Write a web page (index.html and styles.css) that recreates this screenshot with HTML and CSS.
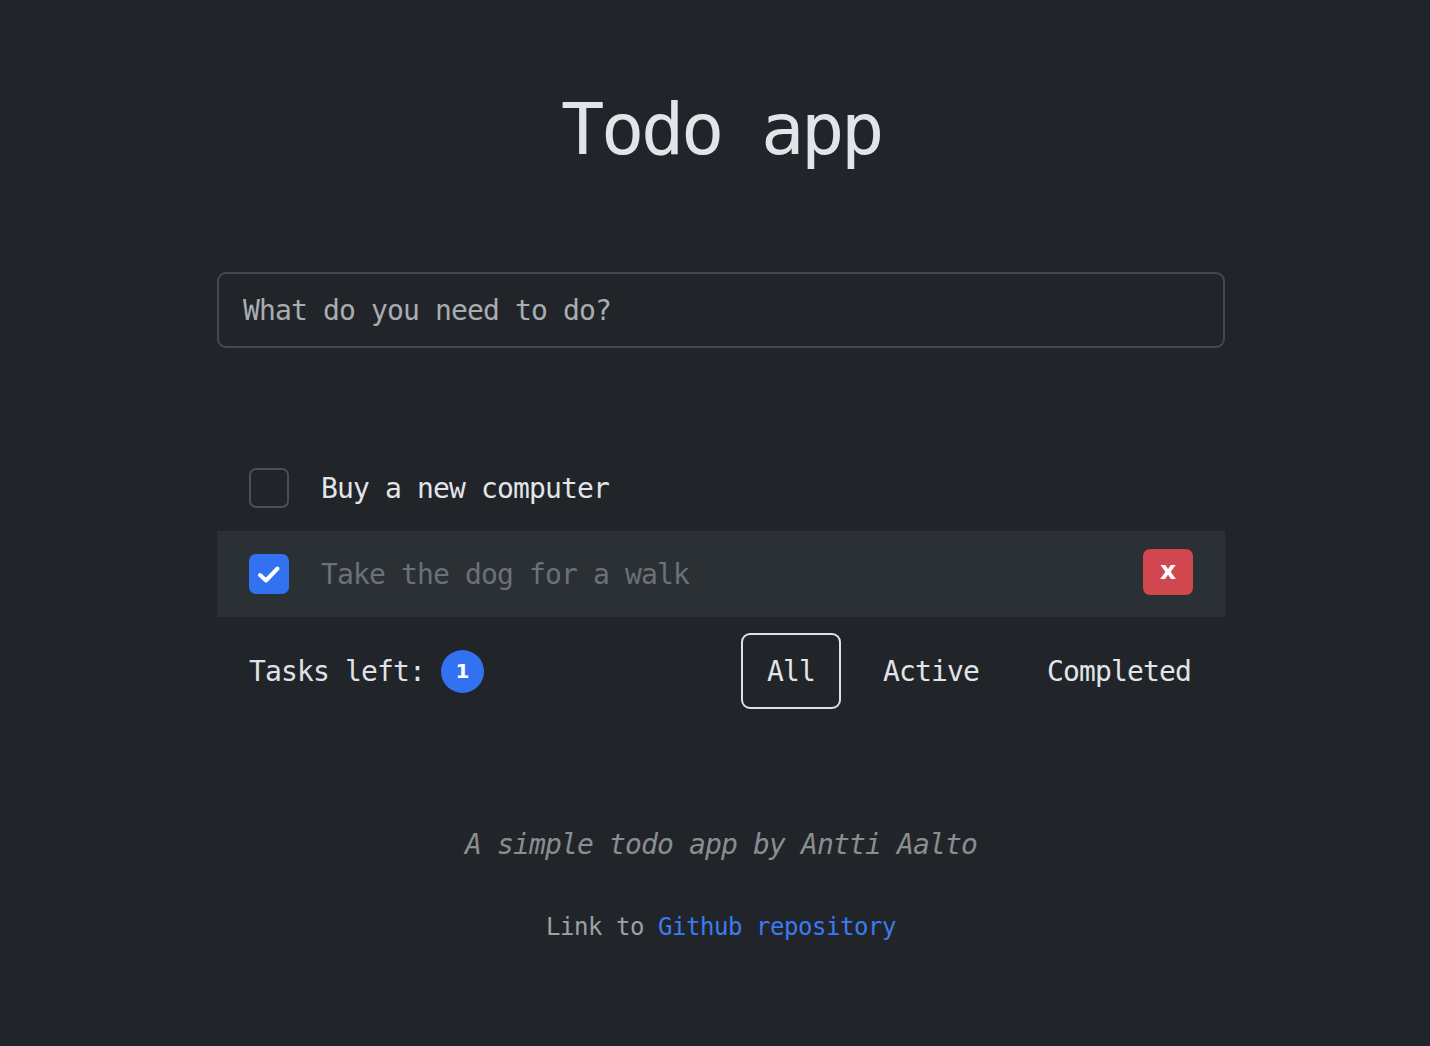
FILE: index.html
```html
<!DOCTYPE html>
<html lang="en">
<head>
<meta charset="utf-8">
<title>Todo app</title>
<link rel="stylesheet" href="styles.css">
</head>
<body>
<div class="page">
  <h1 class="title">Todo app</h1>
  <input class="new-todo" type="text" placeholder="What do you need to do?">
  <ul class="todo-list">
    <li class="todo">
      <span class="check"></span>
      <span class="todo-text">Buy a new computer</span>
    </li>
    <li class="todo done">
      <span class="check checked"><svg width="40" height="40" viewBox="0 0 40 40"><polyline points="11,21 17,26.5 28.5,14.5" fill="none" stroke="#fff" stroke-width="4" stroke-linecap="round" stroke-linejoin="round"/></svg></span>
      <span class="todo-text">Take the dog for a walk</span>
      <button class="delete">x</button>
    </li>
  </ul>
  <div class="controls">
    <div class="tasks-left"><span class="label">Tasks left:</span><span class="badge">1</span></div>
    <div class="filters">
      <button class="filter active">All</button>
      <button class="filter">Active</button>
      <button class="filter">Completed</button>
    </div>
  </div>
  <footer class="footer">
    <p class="credit">A simple todo app by Antti Aalto</p>
    <p class="repo">Link to <a href="#">Github repository</a></p>
  </footer>
</div>
</body>
</html>
```
FILE: styles.css
```css
html, body {
  margin: 0;
  padding: 0;
  background: #212529;
  min-height: 100%;
}
body {
  font-family: "DejaVu Sans Mono", monospace;
  color: #dee2e6;
  font-size: 28px;
  letter-spacing: -0.86px;
}
.page {
  box-sizing: border-box;
  width: 1020px;
  margin: 0 auto;
  padding-left: 12px;
  padding-top: 81px;
}
.title {
  margin: 0;
  text-align: center;
  font-weight: normal;
  font-size: 72px;
  letter-spacing: -3.35px;
  line-height: 96px;
  height: 96px;
  color: #e1e4e8;
}
.new-todo {
  display: block;
  box-sizing: border-box;
  width: 100%;
  height: 76px;
  margin-top: 95px;
  padding: 0 24px;
  background: #212529;
  border: 2px solid #45494e;
  border-radius: 9px;
  font-family: inherit;
  font-size: 28px;
  letter-spacing: -0.86px;
  color: #dee2e6;
  outline: none;
}
.new-todo::placeholder {
  color: #a9adb1;
}
.todo-list {
  list-style: none;
  margin: 97px 0 0;
  padding: 0;
}
.todo {
  display: flex;
  align-items: center;
  height: 86px;
  padding: 0 32px;
  gap: 32px;
}
.todo.done {
  background: #2b3035;
}
.check {
  box-sizing: border-box;
  width: 40px;
  height: 40px;
  flex: none;
  border: 2px solid #4a4f55;
  border-radius: 7px;
  display: flex;
}
.check.checked {
  border: none;
  background: #3271f0;
}
.todo-text {
  flex: 1;
  color: #e1e4e8;
}
.done .todo-text {
  color: #6b7177;
}
.delete {
  width: 50px;
  height: 46px;
  margin-bottom: 4px;
  border: none;
  border-radius: 7px;
  background: #d1474f;
  color: #fff;
  font-family: "DejaVu Sans", sans-serif;
  font-weight: bold;
  font-size: 25px;
  letter-spacing: 0;
  padding: 0 0 3px;
}
.controls {
  display: flex;
  align-items: center;
  justify-content: space-between;
  padding: 16px 8px 16px 32px;
}
.tasks-left {
  display: flex;
  align-items: center;
  gap: 16px;
}
.badge {
  width: 43px;
  height: 43px;
  border-radius: 50%;
  background: #3271f0;
  color: #fff;
  font-family: "DejaVu Sans", sans-serif;
  font-weight: bold;
  font-size: 20px;
  letter-spacing: 0;
  display: flex;
  align-items: center;
  justify-content: center;
}
.filters {
  display: flex;
  gap: 16px;
}
.filter {
  height: 76px;
  padding: 2px 24px 0 24px;
  border: 2px solid transparent;
  border-radius: 9px;
  background: transparent;
  font-family: inherit;
  font-size: 28px;
  letter-spacing: -0.86px;
  color: #e1e4e8;
  line-height: 48px;
}
.filter.active {
  border-color: #dee2e6;
}
.footer {
  text-align: center;
}
.credit {
  margin: 100px 0 0;
  font-style: italic;
  line-height: 40px;
  color: #8a8d91;
}
.repo {
  margin: 45px 0 0;
  font-size: 24px;
  letter-spacing: -0.45px;
  line-height: 34px;
  color: #9da0a4;
}
.repo a {
  color: #3b7bf1;
  text-decoration: none;
}
```
